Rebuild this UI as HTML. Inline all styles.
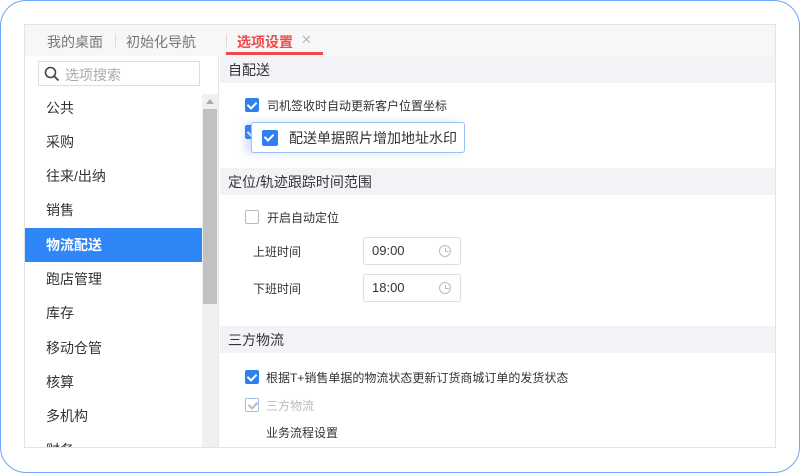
<!DOCTYPE html>
<html><head><meta charset="utf-8"><style>
*{margin:0;padding:0;box-sizing:border-box}
body{width:800px;height:473px;background:#fff;font-family:"Liberation Sans","Noto Sans CJK SC",sans-serif;position:relative;overflow:hidden;color:#333}
.frame{position:absolute;left:0;top:0;width:800px;height:473px;border:1.5px solid #6fa6f5;border-radius:26px}
.win{position:absolute;left:24px;top:24px;width:752px;height:424px;border:1px solid #e3e3e3;overflow:hidden;background:#fff}
.tabs{position:absolute;left:0;top:0;width:752px;height:31px;background:#f7f7f7}
.tab{position:absolute;top:7px;font-size:14px;color:#777}
.side{position:absolute;left:0;top:31px;width:194px;height:393px;background:#fff;border-right:1px solid #e6e6e6}
.search{position:absolute;left:13px;top:5px;width:162px;height:25px;border:1px solid #ddd;font-size:14px;color:#aaa;padding:3px 0 0 26px}
.item{position:absolute;left:0;width:177px;height:34px;font-size:14px;padding:7px 0 0 21px;color:#333}
.item.act{background:#2f86f6;color:#fff;font-weight:bold}
.sb{position:absolute;left:177px;top:38px;width:16px;height:355px;background:#f0f0f0}
.thumb{position:absolute;left:1px;top:15px;width:14px;height:195px;background:#c1c1c1}
.content{position:absolute;left:195px;top:31px;width:557px;height:393px}
.hd{position:absolute;left:0;width:557px;height:27px;background:#f2f3f6;font-size:14px;padding:4px 0 0 8px;color:#333}
.row{position:absolute;font-size:12px;color:#333}
.cb{position:absolute;width:14px;height:14px;border-radius:2px;background:#2f7ff0}
.cb:after{content:"";position:absolute;left:4px;top:1.5px;width:4px;height:7px;border:solid #fff;border-width:0 2px 2px 0;transform:rotate(45deg)}
.cb.off{background:#fff;border:1px solid #bbb}.cb.off:after{display:none}
.cb.dis{background:#fff;border:1px solid #9dbff0}.cb.dis:after{border-color:#bbb;left:3.5px;top:0.5px}
.inp{position:absolute;width:98px;height:28px;border:1px solid #ddd;border-radius:3px;font-size:13px;padding:5px 0 0 8px;color:#333}
.clk{position:absolute;right:9px;top:7px;width:12px;height:12px;border:1px solid #bbb;border-radius:50%}
.clk:after{content:"";position:absolute;left:4.5px;top:2px;width:3px;height:3px;border:solid #bbb;border-width:0 0 1px 1px}
.pop{position:absolute;left:251px;top:122px;width:214px;height:31px;border:1px solid #9cc0f5;border-radius:3px;background:#fff;box-shadow:-6px 0 8px rgba(80,140,240,.25)}
</style></head><body>
<div class="frame"></div>
<div class="win">
 <div class="tabs">
  <div class="tab" style="left:22px">我的桌面</div>
  <div style="position:absolute;left:90px;top:9px;width:1px;height:14px;background:#ddd"></div>
  <div class="tab" style="left:101px">初始化导航</div>
  <div style="position:absolute;left:201px;top:9px;width:1px;height:14px;background:#ddd"></div>
  <div class="tab" style="left:212px;color:#f04a4a;font-weight:bold">选项设置</div>
  <div class="tab" style="left:276px;color:#bbb;font-size:13px">✕</div>
  <div style="position:absolute;left:201px;top:27px;width:97px;height:3px;background:#f04a4a"></div>
 </div>
 <div class="side">
  <div class="search"><svg style="position:absolute;left:5px;top:4px" width="16" height="16" viewBox="0 0 16 16"><circle cx="6.5" cy="6.5" r="5" fill="none" stroke="#444" stroke-width="1.6"/><path d="M10 10l4.5 4.5" stroke="#444" stroke-width="1.8"/></svg>选项搜索</div>
  <div class="item" style="top:35px">公共</div>
  <div class="item" style="top:69px">采购</div>
  <div class="item" style="top:103px">往来/出纳</div>
  <div class="item" style="top:137px">销售</div>
  <div class="item act" style="top:172px">物流配送</div>
  <div class="item" style="top:206px">跑店管理</div>
  <div class="item" style="top:240px">库存</div>
  <div class="item" style="top:275px">移动仓管</div>
  <div class="item" style="top:309px">核算</div>
  <div class="item" style="top:343px">多机构</div>
  <div class="item" style="top:377px">财务</div>
  <div class="sb"><div style="position:absolute;left:4px;top:5px;border:4px solid transparent;border-bottom:5px solid #aaa;border-top:0"></div><div class="thumb"></div></div>
 </div>
 <div class="content">
  <div class="hd" style="top:0">自配送</div>
  <div class="cb" style="left:25px;top:42px"></div><div class="row" style="left:47px;top:41px">司机签收时自动更新客户位置坐标</div>
  <div class="cb" style="left:25px;top:69px"></div>
  <div class="hd" style="top:112px">定位/轨迹跟踪时间范围</div>
  <div class="cb off" style="left:25px;top:154px"></div><div class="row" style="left:47px;top:153px">开启自动定位</div>
  <div class="row" style="left:33px;top:187px">上班时间</div>
  <div class="inp" style="left:143px;top:181px">09:00<div class="clk"></div></div>
  <div class="row" style="left:33px;top:224px">下班时间</div>
  <div class="inp" style="left:143px;top:218px">18:00<div class="clk"></div></div>
  <div class="hd" style="top:270px">三方物流</div>
  <div class="cb" style="left:25px;top:314px"></div><div class="row" style="left:46px;top:313px">根据T+销售单据的物流状态更新订货商城订单的发货状态</div>
  <div class="cb dis" style="left:25px;top:342px"></div><div class="row" style="left:46px;top:341px;color:#bbb">三方物流</div>
  <div class="row" style="left:46px;top:368px">业务流程设置</div>
 </div>
</div>
<div class="pop"><div class="cb" style="left:10px;top:7px;width:16px;height:16px"></div><div style="position:absolute;left:37px;top:5px;font-size:14px;color:#333">配送单据照片增加地址水印</div></div>
</body></html>
